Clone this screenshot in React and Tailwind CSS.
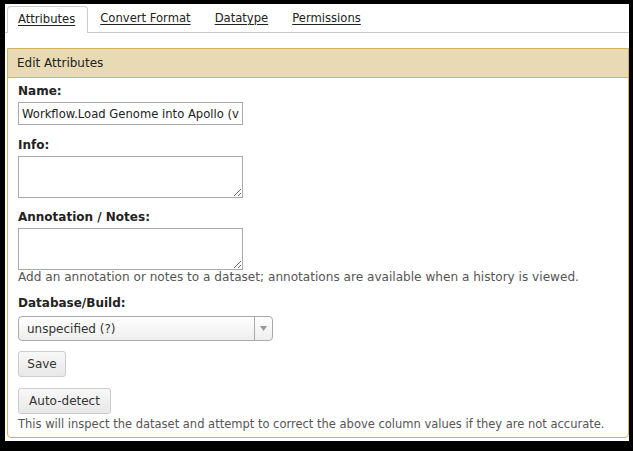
import React from 'react';

const tabs = ['Attributes', 'Convert Format', 'Datatype', 'Permissions'];

const Label = ({ children }) => (
  <div className="font-bold text-[#222] text-[12px] leading-[15px] mb-[3px]">{children}</div>
);

const App = () => {
  return (
    <div className="w-[633px] h-[451px] bg-black pt-[4px] pl-[5px] overflow-hidden">
      <div
        className="w-[624px] h-[437px] bg-white flex flex-col text-[#333]"
        style={{ fontFamily: '"DejaVu Sans", Verdana, sans-serif' }}
      >
        {/* tabs */}
        <div className="flex items-end h-[29px] border-b border-[#c8c8c8] pl-[2px]">
          {tabs.map((tab, i) => (
            <div
              key={tab}
              className={
                i === 0
                  ? 'h-[27px] pl-[10px] pr-[12px] border border-b-0 border-[#ccc] rounded-t-[4px] bg-white -mb-px flex items-center'
                  : 'h-[27px] px-[12px] flex items-center'
              }
            >
              <span className="underline text-[11.6px] text-[#222] underline-offset-2">{tab}</span>
            </div>
          ))}
        </div>

        {/* panel */}
        <div className="mt-[15px] ml-[2px] w-[622px] flex-1 mb-[3px] border border-[#d6b25f] rounded-b-[4px] flex flex-col">
          <div className="h-[29px] bg-[#e8dab4] border-b border-[#d6b25f] flex items-center px-[9px] text-[12px] text-[#222]">
            Edit Attributes
          </div>
          <div className="px-[10px] pt-[6px] text-[12px]">
            <Label>Name:</Label>
            <input
              defaultValue="Workflow.Load Genome into Apollo (v1)"
              className="block w-[225px] h-[23px] border border-[#aaa] px-[3px] text-[11.6px] text-[#222] outline-none"
              style={{ fontFamily: '"DejaVu Sans", Verdana, sans-serif' }}
            />

            <div className="mt-[13px]">
              <Label>Info:</Label>
              <textarea className="block w-[225px] h-[42px] border border-[#aaa] outline-none" />
            </div>

            <div className="mt-[12px]">
              <Label>Annotation / Notes:</Label>
              <textarea className="block w-[225px] h-[42px] border border-[#aaa] outline-none" />
              <div className="text-[12.1px] text-[#555] leading-[15px] whitespace-nowrap">
                Add an annotation or notes to a dataset; annotations are available when a history is viewed.
              </div>
            </div>

            <div className="mt-[11px]">
              <Label>Database/Build:</Label>
              <div className="mt-[5px] w-[255px] h-[25px] border border-[#aaa] rounded-[4px] bg-gradient-to-b from-white to-[#eee] flex items-center">
                <span className="flex-1 pl-[8px] text-[12px] text-[#333]">unspecified (?)</span>
                <span className="w-[18px] h-full border-l border-[#aaa] flex items-center justify-center">
                  <svg width="7" height="5" viewBox="0 0 7 5">
                    <path d="M0 0 L7 0 L3.5 5 Z" fill="#999" />
                  </svg>
                </span>
              </div>
            </div>

            <button className="mt-[10px] h-[26px] w-[48px] border border-[#ccc] rounded-[3px] bg-gradient-to-b from-[#f8f8f8] to-[#e8e8e8] text-[12px] text-[#333] block">
              Save
            </button>

            <button className="mt-[11px] h-[26px] w-[93px] border border-[#ccc] rounded-[3px] bg-gradient-to-b from-[#f8f8f8] to-[#e8e8e8] text-[12px] text-[#333] block">
              Auto-detect
            </button>
            <div className="text-[11.5px] text-[#555] leading-[15px] mt-[3px] whitespace-nowrap">
              This will inspect the dataset and attempt to correct the above column values if they are not accurate.
            </div>
          </div>
        </div>
      </div>
    </div>
  );
};

export default App;
